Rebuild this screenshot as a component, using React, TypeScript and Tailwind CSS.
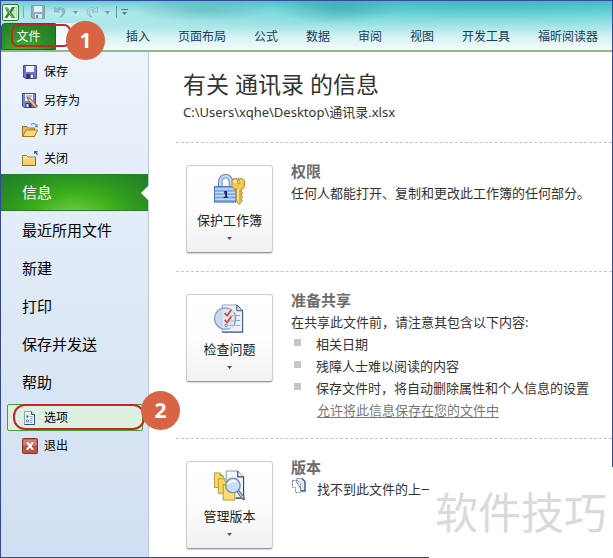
import { useState } from 'react'
import type { ReactNode } from 'react'

const tabs = ['插入', '页面布局', '公式', '数据', '审阅', '视图', '开发工具', '福昕阅读器']

const fileActions = [
  { label: '保存', icon: <SaveIcon /> },
  { label: '另存为', icon: <SaveAsIcon /> },
  { label: '打开', icon: <OpenIcon /> },
  { label: '关闭', icon: <CloseFolderIcon /> },
]

const pages = ['信息', '最近所用文件', '新建', '打印', '保存并发送', '帮助']

const shareNotes = ['相关日期', '残障人士难以阅读的内容', '保存文件时，将自动删除属性和个人信息的设置']

function ExcelLogo() {
  return (
    <svg width="17" height="17" viewBox="0 0 17 17">
      <rect x="0.5" y="0.5" width="16" height="16" rx="1.5" fill="#f4faf3" stroke="#2c7a35" />
      <path d="M11 3h3.500v11h-3.500z" fill="#d8ecd5" stroke="#a5cfa2" strokeWidth="0.7" />
      <path d="M11 6.500h4M11 10h4" stroke="#a5cfa2" strokeWidth="0.7" />
      <path d="M2.500 3.500h3.400L7.800 7l1.900-4H13L9.600 8.600 13 14H9.600l-2.100-3.300L5.300 14H2.300l3.400-5.300z" fill="#2d8a35" />
      <path d="M4 4.500h1.300l4.700 8.500h1.500" stroke="#8bd07c" strokeWidth="0.9" fill="none" />
    </svg>
  )
}

function FadedDisk() {
  return (
    <svg width="14" height="14" viewBox="0 0 14 14">
      <path d="M.5.5h13v13H2L.5 12z" fill="#93adc0" stroke="#7f9bb0" />
      <path d="M3 1h8v6H3z" fill="#e3f3f5" />
      <path d="M4 9h7v4.500H4z" fill="#d4e8ec" />
      <path d="M5 10h2v3H5z" fill="#71899e" />
    </svg>
  )
}

function UndoIcon({ flip = false }: { flip?: boolean }) {
  return (
    <svg width="13" height="14" viewBox="0 0 13 14" className={flip ? '-scale-x-100' : ''}>
      <path
        d="M1.500 2v5h5L4.800 5.600C7 4 10 4.700 9.800 7.200 9.700 9 8.500 10.500 7 12.500 10.500 10.800 12 8.800 12 6.300 11.800 2.500 6.800 1.500 3.500 3.900z"
        fill={flip ? '#b9e3e6' : '#94b9c8'}
        stroke="#84a9b8"
        strokeWidth="0.7"
      />
    </svg>
  )
}

function Caret({ className = 'text-[#6f97a3]' }: { className?: string }) {
  return (
    <svg width="5" height="3" viewBox="0 0 5 3" className={className}>
      <path d="M0 0h5L2.500 3z" fill="currentColor" />
    </svg>
  )
}

function SaveIcon() {
  return (
    <svg width="16" height="16" viewBox="0 0 16 16">
      <path d="M1.500 1.500h13v13h-11.500l-1.500-1.500z" fill="#6d75d0" stroke="#464b9c" />
      <path d="M4 2h8v6H4z" fill="#f2f5fd" />
      <path d="M12.500 2.500h1V4h-1z" fill="#b9bff0" />
      <path d="M4.500 10h7v4.500h-7z" fill="#2e3270" />
      <path d="M8.500 10.500h2.500v3.500H8.500z" fill="#e7eafa" />
    </svg>
  )
}

function SaveAsIcon() {
  return (
    <svg width="16" height="16" viewBox="0 0 16 16">
      <path d="M.5.500h13v14h-11.500l-1.500-1.500z" fill="#7c83d4" stroke="#464b9c" />
      <path d="M3 1h8v7H3z" fill="#f5f7fd" />
      <path d="M4 3h6M4 5h5" stroke="#7d86bd" />
      <path d="M3.500 10h6v4.500h-6z" fill="#2e3270" />
      <path d="M4.500 11h2v3h-2z" fill="#e7eafa" />
      <path d="M5.500 4.500l2.800 1 7 7.500-2 2-7-7.500z" fill="#e9c888" stroke="#6d4d2b" strokeWidth="0.8" />
      <path d="M13 12.700l1.500-1.400 1.300 1.500-1.800 2z" fill="#d45b43" />
    </svg>
  )
}

function OpenIcon() {
  return (
    <svg width="16" height="16" viewBox="0 0 16 16">
      <path d="M.5 14.500v-10h4.500l1.500 1.500h6v8.500z" fill="#e5bc55" stroke="#98742b" />
      <path d="M.8 14.500L4 8h11.500l-3 6.500z" fill="#fbd978" stroke="#a27c2f" />
      <path d="M9 3c1.500-2.300 4-2 5 .3" fill="none" stroke="#7a9bd0" strokeWidth="1.300" />
      <path d="M15.700 2v3.200h-3.400z" fill="#5a7fb8" />
    </svg>
  )
}

function CloseFolderIcon() {
  return (
    <svg width="16" height="16" viewBox="0 0 16 16">
      <path d="M.5 14.500V4.500h4l1.500 1.500h7.500v8.500z" fill="#fae094" stroke="#a1803a" />
      <path d="M1 8h12v6H1z" fill="#f8d070" />
      <path d="M13.500 6v8.500H.5" fill="none" stroke="#866629" />
      <path d="M12 0h4l-1.300 1.200 1.300 2.300-1 .8-1.500-2.300L12 3.500z" fill="#3e5e90" />
    </svg>
  )
}

function OptionsIcon() {
  return (
    <svg width="16" height="16" viewBox="0 0 16 16">
      <path d="M2.500 1.500h7l3 3v10h-10z" fill="#eef4fc" stroke="#8aa2c4" />
      <path d="M9.500 1.500v3h3" fill="#c4d5ec" stroke="#3d5a87" />
      <path d="M12.500 4.500v10h-10" fill="none" stroke="#35517e" />
      <circle cx="5.500" cy="6.500" r="1.200" fill="#516c9b" />
      <circle cx="5.500" cy="11" r="1.200" fill="#fff" stroke="#516c9b" />
      <path d="M8 6.500h2.500M8 8.500h2.500M8 10.500h2.500M8 12.500h2.500" stroke="#8da4c8" />
    </svg>
  )
}

function ExitIcon() {
  return (
    <svg width="16" height="16" viewBox="0 0 16 16">
      <rect x="0.500" y="0.500" width="15" height="15" rx="1" fill="#c4503f" stroke="#81332b" />
      <path d="M1.500 1.500h13v6h-13z" fill="#d9806f" />
      <path d="M3.500 4h3L8 6l1.500-2h3L9.700 8l2.800 4h-3L8 10l-1.500 2h-3l2.800-4z" fill="#fff" stroke="#8a4a42" strokeWidth="0.400" />
    </svg>
  )
}

function ProtectIcon() {
  return (
    <svg width="31" height="32" viewBox="0 0 32 32">
      <path d="M6.500 13V8c0-8.500 11-8.500 11 0v5" fill="none" stroke="#5578b4" strokeWidth="4.500" />
      <path d="M6.500 13V8c0-8.500 11-8.500 11 0v5" fill="none" stroke="#c6daf5" strokeWidth="2.700" />
      <rect x="0.500" y="12.500" width="22" height="16" fill="#7fa6e8" stroke="#4870ba" />
      <path d="M1 15h21M1 18.500h21M1 22h21M1 25.500h21" stroke="#c5dbfb" strokeWidth="1.500" />
      <path d="M10.500 17h3v6.500h-2v-4h-1z" fill="#16305f" />
      <path d="M10 23h4.500v1.200H10z" fill="#16305f" />
      <path
        d="M19.500 4.500h10l2 2v6l-2 2.500H28v2l1.500 2-1.500 2 1.500 2-1.500 2 1 2.500-3 3.500-2.500-3V15h-3l-2-2.500v-6z"
        fill="#f2c94d"
        stroke="#b08528"
      />
      <path d="M20 6h9v2.500h-9z" fill="#fbe9a4" />
      <circle cx="25.500" cy="7.500" r="1.500" fill="#fff" stroke="#95701f" />
      <path d="M24.800 15v12" stroke="#fbe9a4" strokeWidth="1.500" />
      <path d="M26.800 16v11" stroke="#c4972f" />
    </svg>
  )
}

function InspectIcon() {
  return (
    <svg width="31" height="32" viewBox="0 0 32 32">
      <path d="M8.500 1.500h15l6 6v22h-21z" fill="#eef3fb" stroke="#8ea3c2" />
      <path d="M29.500 8v21.500h-21" fill="none" stroke="#4d6386" strokeWidth="1.200" />
      <path d="M23.500 1.500v6h6z" fill="#d8e3f3" stroke="#3c5273" />
      <path d="M21 12.500h6M21 17.500h6M20 22.500h7" stroke="#7c9fd6" />
      <circle cx="11.500" cy="15.500" r="11" fill="#bfd3ec" fillOpacity="0.850" stroke="#8aa0c0" strokeWidth="1.300" />
      <path d="M8.500 6h12v19.500h-12z" fill="#e2ebf8" fillOpacity="0.800" />
      <path d="M16 12.500h6M16 18h6M15 22.500h6" stroke="#9cb7e2" />
      <path d="M11 10l2.500 2.500L18 6.500M11 17l2.500 2.500L18 13.500" fill="none" stroke="#d9463a" strokeWidth="1.800" />
      <circle cx="12.500" cy="22.500" r="1.300" fill="#eff5fe" stroke="#5b82c1" />
    </svg>
  )
}

function VersionsIcon() {
  return (
    <svg width="31" height="32" viewBox="0 0 32 32">
      <path d="M12.500.500h12l6 6v22h-18z" fill="#f2f6fd" stroke="#8299bd" />
      <path d="M24.500.500v6h6v22h-8" fill="none" stroke="#33496f" strokeWidth="1.200" />
      <path d="M.5 2.500h6v3h3v12h-9z" fill="#f7dc64" stroke="#b8973c" />
      <path d="M6.500 2.500l3 3h-3z" fill="#b8973c" />
      <path d="M4.500 8.500h7v3h3v12h-10z" fill="#f6d75c" stroke="#b8973c" />
      <path d="M9.500 14.500h9v4h3v12h-12z" fill="#f9df70" stroke="#b8973c" />
      <path d="M24.500 21l6 8" stroke="#6a7585" strokeWidth="3.500" strokeLinecap="round" />
      <path d="M25 22l5 6" stroke="#ccd5e2" strokeWidth="1.300" />
      <circle cx="19.500" cy="15.500" r="7.500" fill="#c5dff8" fillOpacity="0.950" stroke="#8797ae" strokeWidth="1.600" />
      <path d="M15 14.500c1-3.500 4.500-4.500 8-3" fill="none" stroke="#fff" strokeWidth="1.800" />
    </svg>
  )
}

function NoVersionIcon() {
  return (
    <svg width="16" height="16" viewBox="0 0 16 16" className="shrink-0">
      <path d="M5.500.500h5.500l3 3v9h-6z" fill="#dfe9f6" stroke="#90a6c4" />
      <path d="M11 .5l3 3v9.500h-4" fill="none" stroke="#3f5c87" strokeWidth="1.300" />
      <path d="M1.500 2.500h5l3 3.500v8.500h-5v-5h-3z" fill="#fff" stroke="#75808f" strokeDasharray="2 1" />
      <path d="M5 3l5 8" stroke="#66798f" />
    </svg>
  )
}

function StepBadge({ step, className }: { step: number; className: string }) {
  return (
    <span
      className={`absolute z-10 flex size-[39px] items-center justify-center rounded-full bg-[#d96445] font-['Open_Sans',sans-serif] text-[21px] font-bold text-white ${className}`}
    >
      {step}
    </span>
  )
}

function BigButton({ icon, label }: { icon: ReactNode; label: string }) {
  return (
    <button
      type="button"
      className="flex h-[88px] w-[87px] shrink-0 flex-col items-center rounded-[3px] border border-[#cdced0] border-b-[#97999c] bg-linear-to-b from-white via-[#fdfdfd] to-[#f0f1f3] pt-2 shadow-[0_1px_1px_#d8d8d8]"
    >
      {icon}
      <span className="mt-1 text-[13px] leading-5 text-[#222]">{label}</span>
      <Caret className="mt-[7px] text-[#555]" />
    </button>
  )
}

function InfoSection({ icon, action, title, children }: { icon: ReactNode; action: string; title: string; children: ReactNode }) {
  return (
    <section className="ml-[27px] flex gap-[18px] border-t border-dashed border-[#c4c4c4] pl-[10px] pt-[22px]">
      <BigButton icon={icon} label={action} />
      <div className="-mt-[5px] min-w-0 text-[13px] leading-[22px] text-[#333]">
        <h2 className="text-[15px] leading-[22px] font-bold text-[#6b6b6b]">{title}</h2>
        {children}
      </div>
    </section>
  )
}

export default function App() {
  const [page, setPage] = useState('信息')

  return (
    <div className="relative flex min-h-screen flex-col border border-[#35499a] bg-white font-['Noto_Sans','Noto_Sans_CJK_SC',sans-serif]">
      <header className="border-b-2 border-[#8dbb91] bg-[radial-gradient(ellipse_60px_16px_at_55%_14%,#2a8f9866,transparent),radial-gradient(ellipse_70px_12px_at_33%_18%,#2a8f9855,transparent),radial-gradient(ellipse_200px_18px_at_80%_0%,#279fa855,transparent),radial-gradient(ellipse_at_12%_25%,#ffffff88,transparent_35%),linear-gradient(to_bottom,#48c3c9,#7ddadd_35%,#d0f1f1_70%,#f6fcfb)]">
        <div className="flex h-[22px] items-center pl-px">
          <ExcelLogo />
          <span className="ml-1 h-3 w-px bg-[#7babb5]" />
          <button type="button" aria-label="保存" className="ml-[7px]"><FadedDisk /></button>
          <button type="button" aria-label="撤消" className="ml-2 flex items-center gap-[7px]">
            <UndoIcon />
            <Caret />
          </button>
          <button type="button" aria-label="恢复" className="ml-2 flex items-center gap-[6px]">
            <UndoIcon flip />
            <Caret />
          </button>
          <span className="ml-[6px] h-3 w-px bg-[#6699a5]" />
          <button type="button" aria-label="自定义" className="ml-1 flex flex-col items-center gap-[2px]">
            <span className="h-px w-[7px] bg-[#4b7e8b]" />
            <Caret className="text-[#4b7e8b]" />
          </button>
        </div>

        <nav className="flex h-[27px] items-center text-[12px] whitespace-nowrap text-[#1e395b]">
          <div className="relative mr-[70px] h-full">
            <button
              type="button"
              className="h-full w-[55px] rounded-tl-sm border border-[#196b25] bg-[radial-gradient(ellipse_at_40%_120%,#4fb52b,#2b8a27_60%,#1d7528)] text-white"
            >
              文件
            </button>
            <span className="absolute top-0 left-[55px] h-[26px] w-5 bg-linear-to-b from-white/60 to-white" />
            <span className="absolute top-px left-[10px] h-[23px] w-[60px] rounded-[7px] border-2 border-[#c8242b]" />
            <StepBadge step={1} className="-top-[2px] left-[65px]" />
          </div>
          <div className="flex gap-7">
            {tabs.map((t) => (
              <button key={t} type="button">{t}</button>
            ))}
          </div>
        </nav>
      </header>

      <div className="flex flex-1">
        <aside className="w-[148px] shrink-0 border-r border-[#b9c8da] bg-linear-to-b from-[#ecf3fb] to-[#d0dff1] pt-[5px] text-[12px] text-black">
          {fileActions.map((a) => (
            <button key={a.label} type="button" className="flex h-[29px] w-full items-center gap-[6px] pl-[21px]">
              {a.icon}
              {a.label}
            </button>
          ))}

          <nav className="mt-px text-[15px]">
            {pages.map((p) => (
              <button
                key={p}
                type="button"
                onClick={() => setPage(p)}
                className={`relative flex w-full items-center pl-[21px] ${
                  p === page
                    ? 'h-[37px] border-y border-[#24802a] bg-[radial-gradient(ellipse_at_50%_115%,#72cf4b,#3dae1a_40%,#2f9a1f_60%,#1f7c2b)] text-white'
                    : 'h-[38px]'
                }`}
              >
                {p}
                {p === page && (
                  <svg width="8" height="16" viewBox="0 0 8 16" className="absolute -right-px">
                    <path d="M8 0v16L0 8z" fill="#fff" />
                  </svg>
                )}
              </button>
            ))}
          </nav>

          <div className="relative mt-[3px] ml-[6px]">
            <button
              type="button"
              className="flex h-[27px] w-[136px] items-center gap-[6px] rounded-xs border border-[#3fa535] bg-[#def0e2] pl-[14px]"
            >
              <OptionsIcon />
              选项
            </button>
            <span className="absolute top-0 left-[6px] h-[26px] w-[132px] rounded-xl border-2 border-[#c8242b]" />
            <StepBadge step={2} className="-top-[13px] left-[134px]" />
          </div>
          <button type="button" className="flex h-[30px] w-full items-center gap-[6px] pl-[21px]">
            <ExitIcon />
            退出
          </button>
        </aside>

        <main className="min-w-0 flex-1">
          <div className="h-[90px] pt-4 pl-[34px] text-[#333]">
            <h1 className="text-[23px] leading-8 whitespace-nowrap">有关 通讯录 的信息</h1>
            <p className="text-[13px] leading-6">C:\Users\xqhe\Desktop\通讯录.xlsx</p>
          </div>

          <div className="flex flex-col">
            <InfoSection icon={<ProtectIcon />} action="保护工作簿" title="权限">
              <p>任何人都能打开、复制和更改此工作簿的任何部分。</p>
            </InfoSection>
            <div className="h-[18px]" />
            <InfoSection icon={<InspectIcon />} action="检查问题" title="准备共享">
              <p>在共享此文件前，请注意其包含以下内容:</p>
              <ul>
                {shareNotes.map((note) => (
                  <li key={note} className="flex items-center gap-[15px] pl-[3px]">
                    <span className="-mt-1 size-[7px] shrink-0 bg-[#c6c6c6]" />
                    {note}
                  </li>
                ))}
              </ul>
              <a href="#allow" className="ml-[26px] text-[#777] underline underline-offset-2">
                允许将此信息保存在您的文件中
              </a>
            </InfoSection>
            <div className="h-[17px]" />
            <InfoSection icon={<VersionsIcon />} action="管理版本" title="版本">
              <p className="flex gap-[10px] whitespace-nowrap">
                <NoVersionIcon />
                找不到此文件的上一
              </p>
            </InfoSection>
          </div>
        </main>
      </div>

      <div className="absolute -right-px -bottom-px flex h-[91px] w-[184px] items-center justify-center bg-white text-[43px] leading-none whitespace-nowrap text-[#dadada]">
        软件技巧
      </div>
    </div>
  )
}
